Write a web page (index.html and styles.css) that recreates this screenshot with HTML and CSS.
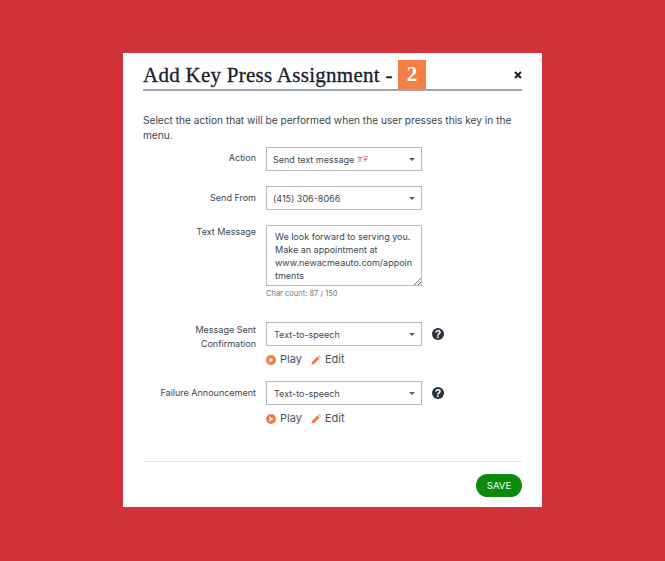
FILE: index.html
```html
<!DOCTYPE html>
<html lang="en">
<head>
    <meta charset="UTF-8">
    <title>Add Key Press Assignment</title>
    <link rel="stylesheet" href="styles.css">
</head>
<body>
    <main class="modal">
        <header class="modal_head">
            <h1>Add Key Press Assignment -</h1>
            <span class="key_badge">2</span>
            <svg class="close_icon" width="8" height="8" viewBox="0 0 8 8"><path d="M1 1l6 6M7 1L1 7" stroke="#16202c" stroke-width="2" fill="none"/></svg>
        </header>

        <p class="intro">Select the action that will be performed when the user presses this key in the menu.</p>

        <div class="row row_action">
            <label>Action</label>
            <div class="field">
                <div class="select select_tight"><span>Send text message</span><span class="sms_mark">文字</span><i class="caret"></i></div>
            </div>
        </div>

        <div class="row row_from">
            <label>Send From</label>
            <div class="field">
                <div class="select select_tight"><span>(415) 306-8066</span><i class="caret"></i></div>
            </div>
        </div>

        <div class="row row_text">
            <label>Text Message</label>
            <div class="field">
                <div class="textarea">
                    We look forward to serving you.<br>Make an appointment at<br>www.newacmeauto.com/appoin<br>tments
                    <svg class="grip" width="8" height="8" viewBox="0 0 8 8"><path d="M1 8l7-7M5 8l3-3" stroke="#777" fill="none"/></svg>
                </div>
                <div class="char_count">Char count: 87 / 150</div>
            </div>
        </div>

        <div class="row row_confirm">
            <label>Message Sent<br>Confirmation</label>
            <div class="field">
                <div class="select_line">
                    <div class="select"><span>Text-to-speech</span><i class="caret"></i></div>
                    <svg class="help" width="12" height="12" viewBox="0 0 12 12"><circle cx="6" cy="6" r="6" fill="#26323e"/><text x="6" y="9.6" text-anchor="middle" class="help_mark">?</text></svg>
                </div>
                <div class="actions">
                    <a><svg width="10" height="10" viewBox="0 0 10 10"><circle cx="5" cy="5" r="5" fill="#f47b3f"/><path d="M3.5 2.5l4 2.5-4 2.5z" fill="white"/></svg>Play</a>
                    <a><svg width="10" height="10" viewBox="0 0 10 10"><path d="M0.5 9.5l0.6-2.7 5.4-5.4 2.1 2.1-5.4 5.4zM7.2.7l.7-.5 1.9 1.9-.5.7z" fill="#f47b3f"/></svg>Edit</a>
                </div>
            </div>
        </div>

        <div class="row row_failure">
            <label>Failure Announcement</label>
            <div class="field">
                <div class="select_line">
                    <div class="select"><span>Text-to-speech</span><i class="caret"></i></div>
                    <svg class="help" width="12" height="12" viewBox="0 0 12 12"><circle cx="6" cy="6" r="6" fill="#26323e"/><text x="6" y="9.6" text-anchor="middle" class="help_mark">?</text></svg>
                </div>
                <div class="actions">
                    <a><svg width="10" height="10" viewBox="0 0 10 10"><circle cx="5" cy="5" r="5" fill="#f47b3f"/><path d="M3.5 2.5l4 2.5-4 2.5z" fill="white"/></svg>Play</a>
                    <a><svg width="10" height="10" viewBox="0 0 10 10"><path d="M0.5 9.5l0.6-2.7 5.4-5.4 2.1 2.1-5.4 5.4zM7.2.7l.7-.5 1.9 1.9-.5.7z" fill="#f47b3f"/></svg>Edit</a>
                </div>
            </div>
        </div>

        <footer class="modal_foot">
            <button class="btn_save">SAVE</button>
        </footer>
    </main>
</body>
</html>
```

FILE: styles.css
```css
* {
    margin: 0;
    padding: 0;
    box-sizing: border-box;
}

body {
    width: 665px;
    height: 561px;
    overflow: hidden;
    background-color: #d1323a;
    color: #3c4650;
    font-family: 'Inter', 'Liberation Sans', sans-serif;
    font-size: 9px;
    padding: 53px 123px 0;
}

.modal {
    width: 419px;
    height: 454px;
    background-color: white;
    padding: 7px 20px 0;
}

.modal_head {
    display: flex;
    align-items: center;
    height: 31px;
    border-bottom: 2px solid #a3a6aa;
}

.modal_head h1 {
    font-family: 'Liberation Serif', serif;
    font-weight: 400;
    font-size: 21px;
    letter-spacing: 0.27px;
    color: #16202c;
    width: 255px;
    padding-top: 1px;
    white-space: nowrap;
    -webkit-text-stroke: 0.3px #16202c;
}

.key_badge {
    width: 28px;
    height: 29px;
    background-color: #f47f45;
    color: white;
    font-family: 'Liberation Serif', serif;
    font-weight: 700;
    font-size: 21px;
    text-align: center;
    line-height: 29px;
}

.close_icon {
    margin-left: auto;
}

.intro {
    margin-top: 22px;
    font-size: 10.13px;
    line-height: 15px;
    color: #3c4650;
}

.row {
    display: flex;
}

.row label {
    width: 113px;
    text-align: right;
    line-height: 14px;
    flex: none;
}

.field {
    margin-left: 10px;
}

.row_action { margin-top: 4px; }
.row_from { margin-top: 15px; }
.row_text { margin-top: 15px; }
.row_confirm { margin-top: 23px; }
.row_failure { margin-top: 15px; }

.row_action label { padding-top: 4px; }
.row_from label { padding-top: 5px; }
.row_confirm label { padding-top: 1px; }
.row_failure label { padding-top: 5px; }

.select {
    display: flex;
    align-items: center;
    width: 156px;
    height: 24px;
    border: 1px solid #b9bbbd;
    padding: 0 7px;
    color: #3c4650;
}

.select_tight {
    padding-left: 6px;
}

.sms_mark {
    margin-left: 3px;
    font-family: 'Noto Sans CJK SC', sans-serif;
    font-size: 5.5px;
    color: #e0454d;
}

.caret {
    margin-left: auto;
    margin-right: -1px;
    border-left: 3px solid transparent;
    border-right: 3px solid transparent;
    border-top: 3.5px solid #555c63;
}

.textarea {
    position: relative;
    width: 156px;
    height: 61px;
    border: 1px solid #b9bbbd;
    padding: 4px 8px 0;
    line-height: 13px;
    white-space: nowrap;
}

.grip {
    position: absolute;
    right: 0;
    bottom: 0;
}

.char_count {
    margin-top: 3px;
    font-size: 7.5px;
    line-height: 10px;
    color: #6f767d;
}

.select_line {
    display: flex;
    align-items: center;
    gap: 10px;
}

.help_mark {
    font-family: 'Liberation Sans', sans-serif;
    font-weight: 700;
    font-size: 10.5px;
    fill: white;
}

.actions {
    display: flex;
    gap: 9px;
    margin-top: 7px;
    font-size: 11px;
    line-height: 13px;
}

.actions a {
    display: flex;
    align-items: center;
    gap: 4px;
    color: #4a525a;
}

.modal_foot {
    margin-top: 36px;
    border-top: 1px solid #e6e6e6;
    padding-top: 12px;
    display: flex;
    justify-content: flex-end;
}

.btn_save {
    width: 46px;
    height: 23px;
    border: none;
    border-radius: 12px;
    background-color: #0b8a0b;
    color: white;
    font-family: 'Inter', sans-serif;
    font-size: 9.5px;
}
```
